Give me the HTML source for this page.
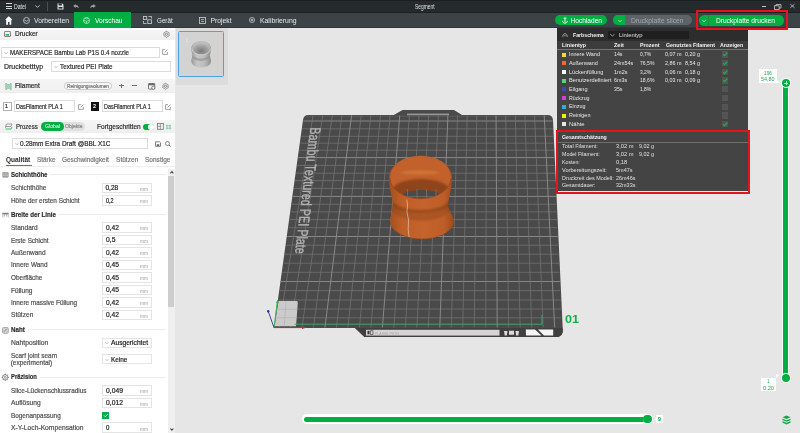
<!DOCTYPE html>
<html><head><meta charset="utf-8"><style>
html,body{margin:0;padding:0;}
body{width:800px;height:433px;overflow:hidden;position:relative;background:#e6e6e6;font-family:"Liberation Sans", sans-serif;}
.t{position:absolute;white-space:pre;font-family:"Liberation Sans", sans-serif;-webkit-text-stroke:0.2px currentColor;}
svg{position:absolute;overflow:visible}
</style></head><body><div style="position:absolute;left:0;top:0;width:800px;height:433px;overflow:hidden;filter:blur(0.25px)">
<div style="position:absolute;left:0px;top:0px;width:800px;height:12px;background:#252b2d"></div>
<div style="position:absolute;left:0px;top:0px;width:800px;height:1px;background:#1b1f21"></div>
<div style="position:absolute;left:6.2px;top:3.2px;width:6px;height:1px;background:#d8d8d8"></div>
<div style="position:absolute;left:6.2px;top:5.7px;width:6px;height:1px;background:#d8d8d8"></div>
<div style="position:absolute;left:6.2px;top:8.2px;width:6px;height:1px;background:#d8d8d8"></div>
<div class="t" style="left:13.80px;top:2px;font-size:6.500px;line-height:10px;color:#e6e6e6;font-weight:normal;transform:scaleX(0.7908);transform-origin:0 0;-webkit-text-stroke:0;">Datei</div>
<svg style="left:35px;top:5px" width="5" height="3"><path d="M0.3 0.4 L2.5 2.4 L4.7 0.4" stroke="#bfbfbf" stroke-width="0.9" fill="none"/></svg>
<div style="position:absolute;left:47.3px;top:2px;width:0.8px;height:9px;background:#4a4f52"></div>
<svg style="left:57px;top:3px" width="7" height="7"><path d="M0.5 0.5 H5.3 L6.5 1.7 V6.5 H0.5 Z" fill="#e0e0e0"/><rect x="1.6" y="0.5" width="3.2" height="2" fill="#252b2d"/><rect x="1.6" y="4" width="3.8" height="1.6" fill="#252b2d"/></svg>
<svg style="left:73px;top:4px" width="6" height="5"><path d="M0.2 2 L2.6 0 V1.1 C4.6 1.1 5.8 2.2 5.8 4.6 C5 3.3 4 3 2.6 3 V4.1 Z" fill="#9a9a9a"/></svg>
<svg style="left:90px;top:4px" width="6" height="5"><path d="M5.8 2 L3.4 0 V1.1 C1.4 1.1 0.2 2.2 0.2 4.6 C1 3.3 2 3 3.4 3 V4.1 Z" fill="#9a9a9a"/></svg>
<div class="t" style="left:414.50px;top:2px;font-size:6.500px;line-height:10px;color:#e0e0e0;font-weight:normal;transform:scaleX(0.7495);transform-origin:0 0;-webkit-text-stroke:0;">Segment</div>
<div style="position:absolute;left:762.3px;top:6.2px;width:4.2px;height:0.8px;background:#c8c8c8"></div>
<svg style="left:774px;top:3.5px" width="8" height="6"><rect x="0.5" y="1.8" width="4.6" height="3.6" fill="none" stroke="#c8c8c8" stroke-width="0.8"/><path d="M2 1.8 V0.5 H7 V4 H5.1" fill="none" stroke="#c8c8c8" stroke-width="0.8"/></svg>
<svg style="left:789.5px;top:4.3px" width="5" height="4"><path d="M0.3 0.2 L4.5 3.8 M4.5 0.2 L0.3 3.8" stroke="#c8c8c8" stroke-width="0.8"/></svg>
<div style="position:absolute;left:0px;top:12px;width:800px;height:16px;background:#3c4346"></div>
<div style="position:absolute;left:0px;top:11.5px;width:800px;height:1px;background:#1c2022"></div>
<div style="position:absolute;left:0px;top:27.3px;width:800px;height:0.7px;background:#30363a"></div>
<svg style="left:5px;top:16px" width="8" height="9"><path d="M3.75 0.3 L7.4 3.8 H6.3 V8.7 H4.5 V6 H3 V8.7 H1.2 V3.8 H0.1 Z" fill="#ffffff"/></svg>
<svg style="left:22.5px;top:16.5px" width="7" height="7"><circle cx="3.5" cy="3.5" r="3" fill="none" stroke="#d0d0d0" stroke-width="0.8"/><path d="M1.2 3 L3.5 4.2 L5.8 3" fill="none" stroke="#d0d0d0" stroke-width="0.8"/></svg>
<div class="t" style="left:33.70px;top:16px;font-size:6.800px;line-height:10px;color:#e8e8e8;font-weight:normal;transform:scaleX(1.0063);transform-origin:0 0;-webkit-text-stroke:0;">Vorbereiten</div>
<div style="position:absolute;left:74px;top:12px;width:56.5px;height:16px;background:#00ae42"></div>
<svg style="left:83px;top:16.5px" width="7" height="7"><circle cx="3.5" cy="3.5" r="3" fill="none" stroke="#bfe8cc" stroke-width="0.8"/><path d="M1 3.2 L3.5 4.5 L6 3.2 M3.5 4.5 V6.5 M2 1 L3.5 2 L5 1" fill="none" stroke="#bfe8cc" stroke-width="0.7"/></svg>
<div class="t" style="left:94.80px;top:16px;font-size:6.800px;line-height:10px;color:#ffffff;font-weight:normal;transform:scaleX(0.9699);transform-origin:0 0;-webkit-text-stroke:0;">Vorschau</div>
<svg style="left:142.5px;top:16px" width="9" height="8"><rect x="0.5" y="0.5" width="3.2" height="3" fill="none" stroke="#d0d0d0" stroke-width="0.8"/><rect x="4.8" y="3.8" width="3.6" height="3.8" fill="none" stroke="#d0d0d0" stroke-width="0.8"/><path d="M0.5 5 V7.5 H3.5 M5.5 0.5 H8.5 V2.5" fill="none" stroke="#d0d0d0" stroke-width="0.8"/></svg>
<div class="t" style="left:156.80px;top:16px;font-size:6.800px;line-height:10px;color:#e8e8e8;font-weight:normal;transform:scaleX(0.9231);transform-origin:0 0;-webkit-text-stroke:0;">Gerät</div>
<svg style="left:199px;top:16.5px" width="7" height="7"><rect x="0.5" y="0.5" width="6" height="6" fill="none" stroke="#d0d0d0" stroke-width="0.8"/><path d="M2 2.5 H5 M2 4.5 H5" stroke="#d0d0d0" stroke-width="0.7"/></svg>
<div class="t" style="left:210.50px;top:16px;font-size:6.800px;line-height:10px;color:#e8e8e8;font-weight:normal;-webkit-text-stroke:0;">Projekt</div>
<svg style="left:248.5px;top:17px" width="6" height="6"><circle cx="3" cy="3" r="2.5" fill="none" stroke="#d0d0d0" stroke-width="0.8"/><circle cx="3" cy="3" r="1" fill="#d0d0d0"/></svg>
<div class="t" style="left:259.50px;top:16px;font-size:6.800px;line-height:10px;color:#e8e8e8;font-weight:normal;transform:scaleX(1.0058);transform-origin:0 0;-webkit-text-stroke:0;">Kalibrierung</div>
<div style="position:absolute;left:554.7px;top:15.3px;width:52.5px;height:10px;background:#00ae42;border-radius:5px"></div>
<svg style="left:562px;top:17px" width="6" height="7"><path d="M3 0.5 V5.5 M1.5 1.2 H4.5 M0.5 3.8 C0.8 5.5 1.8 6.2 3 6.2 C4.2 6.2 5.2 5.5 5.5 3.8" fill="none" stroke="#fff" stroke-width="0.9"/></svg>
<div class="t" style="left:570.50px;top:16px;font-size:6.600px;line-height:10px;color:#ffffff;font-weight:normal;-webkit-text-stroke:0;">Hochladen</div>
<div style="position:absolute;left:613.4px;top:15.3px;width:78.6px;height:10px;background:#5d6366;border-radius:5px"></div>
<div style="position:absolute;left:613.4px;top:15.3px;width:12px;height:10px;background:#00ae42;border-radius:5px 0 0 5px"></div>
<svg style="left:617.5px;top:19.5px" width="4" height="2"><path d="M0.3 0.3 L2 1.6 L3.7 0.3" stroke="#e8f5ec" stroke-width="0.7" fill="none"/></svg>
<div class="t" style="left:630.50px;top:16px;font-size:6.600px;line-height:10px;color:#a3a8aa;font-weight:normal;transform:scaleX(1.0079);transform-origin:0 0;-webkit-text-stroke:0;">Druckplatte slicen</div>
<div style="position:absolute;left:698.7px;top:15px;width:85.5px;height:10.5px;background:#00ae42;border-radius:5.25px"></div>
<div style="position:absolute;left:708.3px;top:15px;width:0.7px;height:10.5px;background:#1e8c45"></div>
<svg style="left:701.5px;top:19.5px" width="4" height="2"><path d="M0.3 0.3 L2 1.6 L3.7 0.3" stroke="#e8f5ec" stroke-width="0.7" fill="none"/></svg>
<div class="t" style="left:715.70px;top:16px;font-size:6.600px;line-height:10px;color:#ffffff;font-weight:normal;transform:scaleX(1.0052);transform-origin:0 0;-webkit-text-stroke:0;">Druckplatte drucken</div>
<div style="position:absolute;left:0px;top:28px;width:175px;height:405px;background:#ffffff"></div>
<div style="position:absolute;left:0px;top:29.5px;width:175px;height:10.100000000000001px;background:linear-gradient(#f5f5f5,#efefef)"></div>
<svg style="left:4px;top:31px" width="7" height="6"><rect x="0.5" y="0.5" width="6" height="5" rx="0.5" fill="#f2f2f2" stroke="#7d7d7d" stroke-width="0.9"/><rect x="1.5" y="3" width="3.5" height="1.8" fill="#2fc46a"/></svg>
<div class="t" style="left:15.00px;top:29px;font-size:7.000px;line-height:10px;color:#2d2d2d;font-weight:normal;transform:scaleX(0.9264);transform-origin:0 0;">Drucker</div>
<svg style="left:162.5px;top:30.8px" width="7" height="7"><path d="M6.05 3.30 L6.04 3.57 L5.99 3.83 L6.14 4.16 L6.19 4.50 L6.10 4.80 L5.88 5.03 L5.56 5.16 L5.21 5.20 L5.00 5.36 L4.78 5.51 L4.54 5.63 L4.29 5.73 L4.08 6.01 L3.81 6.23 L3.50 6.30 L3.19 6.23 L2.92 6.01 L2.71 5.73 L2.46 5.63 L2.23 5.51 L2.00 5.36 L1.79 5.20 L1.44 5.16 L1.12 5.03 L0.90 4.80 L0.81 4.50 L0.86 4.16 L1.01 3.83 L0.96 3.57 L0.95 3.30 L0.96 3.03 L1.01 2.77 L0.86 2.44 L0.81 2.10 L0.90 1.80 L1.12 1.57 L1.44 1.44 L1.79 1.40 L2.00 1.24 L2.22 1.09 L2.46 0.97 L2.71 0.87 L2.92 0.59 L3.19 0.37 L3.50 0.30 L3.81 0.37 L4.08 0.59 L4.29 0.87 L4.54 0.97 L4.78 1.09 L5.00 1.24 L5.21 1.40 L5.56 1.44 L5.88 1.57 L6.10 1.80 L6.19 2.10 L6.14 2.44 L5.99 2.77 L6.04 3.03 Z" fill="none" stroke="#6e6e6e" stroke-width="0.8"/><circle cx="3.5" cy="3.3" r="1.1" fill="none" stroke="#6e6e6e" stroke-width="0.8"/></svg>
<div style="position:absolute;left:1.1px;top:47.2px;width:159.3px;height:11px;box-sizing:border-box;border:0.8px solid #dcdcdc;background:#fff"></div>
<svg style="left:3.9px;top:52.2px" width="4" height="2"><path d="M0.3 0.3 L2 1.6 L3.7 0.3" stroke="#9a9a9a" stroke-width="0.6" fill="none"/></svg>
<div class="t" style="left:9.70px;top:48px;font-size:7.000px;line-height:10px;color:#2a2a2a;font-weight:normal;transform:scaleX(0.8822);transform-origin:0 0;">MAKERSPACE Bambu Lab P1S 0.4 nozzle</div>
<svg style="left:162.2px;top:49px" width="6" height="6"><path d="M3 0.6 H0.6 V5.4 H5.4 V3" fill="none" stroke="#8a8a8a" stroke-width="0.8"/><path d="M2.6 3.4 L5.5 0.5" stroke="#8a8a8a" stroke-width="0.8"/></svg>
<div class="t" style="left:4.20px;top:62px;font-size:7.000px;line-height:10px;color:#2d2d2d;font-weight:normal;transform:scaleX(0.9925);transform-origin:0 0;">Druckbetttyp</div>
<div style="position:absolute;left:51.3px;top:60.5px;width:119.3px;height:11.7px;box-sizing:border-box;border:0.8px solid #dcdcdc;background:#fff"></div>
<svg style="left:54.099999999999994px;top:65.85px" width="4" height="2"><path d="M0.3 0.3 L2 1.6 L3.7 0.3" stroke="#9a9a9a" stroke-width="0.6" fill="none"/></svg>
<div class="t" style="left:60.20px;top:62px;font-size:7.000px;line-height:10px;color:#2a2a2a;font-weight:normal;transform:scaleX(0.9073);transform-origin:0 0;">Textured PEI Plate</div>
<div style="position:absolute;left:0px;top:79px;width:175px;height:13.700000000000003px;background:linear-gradient(#f5f5f5,#efefef)"></div>
<svg style="left:4.5px;top:82.5px" width="7" height="7"><rect x="1.3" y="1" width="4.4" height="5" fill="#8fdcaa"/><path d="M0.7 0.6 H2 M0.7 6.4 H2 M5 0.6 H6.3 M5 6.4 H6.3 M0.9 0.6 V6.4 M6.1 0.6 V6.4" stroke="#9a9a9a" stroke-width="0.8" fill="none"/></svg>
<div class="t" style="left:15.00px;top:81px;font-size:7.000px;line-height:10px;color:#2d2d2d;font-weight:normal;transform:scaleX(0.9202);transform-origin:0 0;">Filament</div>
<div style="position:absolute;left:64.3px;top:82px;width:47.5px;height:7.5px;box-sizing:border-box;border:0.7px solid #c9c9c9;border-radius:3.75px;background:#f6f6f6"></div>
<div class="t" style="left:67.00px;top:82px;font-size:4.500px;line-height:10px;color:#777777;font-weight:normal;transform:scaleX(1.0626);transform-origin:0 0;">Reinigungsvolumen</div>
<div style="position:absolute;left:119.4px;top:85.4px;width:4.6px;height:0.8px;background:#707070"></div>
<div style="position:absolute;left:121.3px;top:83.5px;width:0.8px;height:4.6px;background:#707070"></div>
<div style="position:absolute;left:131.6px;top:85.4px;width:5.4px;height:0.8px;background:#707070"></div>
<svg style="left:148px;top:82.5px" width="8" height="7"><rect x="0.5" y="0.5" width="6.2" height="5.6" rx="0.6" fill="none" stroke="#6a6a6a" stroke-width="0.9"/><rect x="0.5" y="0.5" width="6.2" height="1.8" fill="#6a6a6a"/><circle cx="5.3" cy="4.8" r="1.6" fill="#f2f2f2" stroke="#6a6a6a" stroke-width="0.8"/></svg>
<svg style="left:162.2px;top:82.7px" width="7" height="7"><path d="M6.05 3.30 L6.04 3.57 L5.99 3.83 L6.14 4.16 L6.19 4.50 L6.10 4.80 L5.88 5.03 L5.56 5.16 L5.21 5.20 L5.00 5.36 L4.78 5.51 L4.54 5.63 L4.29 5.73 L4.08 6.01 L3.81 6.23 L3.50 6.30 L3.19 6.23 L2.92 6.01 L2.71 5.73 L2.46 5.63 L2.23 5.51 L2.00 5.36 L1.79 5.20 L1.44 5.16 L1.12 5.03 L0.90 4.80 L0.81 4.50 L0.86 4.16 L1.01 3.83 L0.96 3.57 L0.95 3.30 L0.96 3.03 L1.01 2.77 L0.86 2.44 L0.81 2.10 L0.90 1.80 L1.12 1.57 L1.44 1.44 L1.79 1.40 L2.00 1.24 L2.22 1.09 L2.46 0.97 L2.71 0.87 L2.92 0.59 L3.19 0.37 L3.50 0.30 L3.81 0.37 L4.08 0.59 L4.29 0.87 L4.54 0.97 L4.78 1.09 L5.00 1.24 L5.21 1.40 L5.56 1.44 L5.88 1.57 L6.10 1.80 L6.19 2.10 L6.14 2.44 L5.99 2.77 L6.04 3.03 Z" fill="none" stroke="#6e6e6e" stroke-width="0.8"/><circle cx="3.5" cy="3.3" r="1.1" fill="none" stroke="#6e6e6e" stroke-width="0.8"/></svg>
<div style="position:absolute;left:3px;top:102px;width:9px;height:9px;box-sizing:border-box;border:1px solid #b0b0b0;background:#fff"></div>
<div class="t" style="left:5.20px;top:101px;font-size:5.500px;line-height:10px;color:#222;font-weight:normal;transform:scaleX(0.9806);transform-origin:0 0;">1</div>
<div style="position:absolute;left:13.8px;top:100.3px;width:61.7px;height:12.1px;box-sizing:border-box;border:0.8px solid #dcdcdc;background:#fff"></div>
<div class="t" style="left:15.60px;top:102px;font-size:7.000px;line-height:10px;color:#2a2a2a;font-weight:normal;transform:scaleX(0.7794);transform-origin:0 0;">DasFilament PLA 1</div>
<svg style="left:78px;top:103.5px" width="6" height="6"><path d="M3 0.6 H0.6 V5.4 H5.4 V3" fill="none" stroke="#8a8a8a" stroke-width="0.8"/><path d="M2.6 3.4 L5.5 0.5" stroke="#8a8a8a" stroke-width="0.8"/></svg>
<div style="position:absolute;left:90.7px;top:102px;width:8.3px;height:8.7px;background:#111"></div>
<div class="t" style="left:92.80px;top:101px;font-size:5.500px;line-height:10px;color:#fff;font-weight:normal;transform:scaleX(0.9806);transform-origin:0 0;">2</div>
<div style="position:absolute;left:101.6px;top:100.3px;width:61px;height:12.1px;box-sizing:border-box;border:0.8px solid #dcdcdc;background:#fff"></div>
<div class="t" style="left:103.60px;top:102px;font-size:7.000px;line-height:10px;color:#2a2a2a;font-weight:normal;transform:scaleX(0.7794);transform-origin:0 0;">DasFilament PLA 1</div>
<svg style="left:165.2px;top:103.5px" width="6" height="6"><path d="M3 0.6 H0.6 V5.4 H5.4 V3" fill="none" stroke="#8a8a8a" stroke-width="0.8"/><path d="M2.6 3.4 L5.5 0.5" stroke="#8a8a8a" stroke-width="0.8"/></svg>
<div style="position:absolute;left:0px;top:120px;width:175px;height:12.800000000000011px;background:linear-gradient(#f5f5f5,#efefef)"></div>
<svg style="left:4.5px;top:123px" width="8" height="8"><path d="M1.5 1 H7 L6 3.5 H0.5 Z" fill="none" stroke="#8a8a8a" stroke-width="0.8"/><path d="M0.6 3.6 V5" stroke="#8a8a8a" stroke-width="0.8"/><path d="M0.5 6 H6 L7 4" fill="none" stroke="#3cc070" stroke-width="1"/></svg>
<div class="t" style="left:16.00px;top:122px;font-size:7.000px;line-height:10px;color:#2d2d2d;font-weight:normal;transform:scaleX(0.8582);transform-origin:0 0;">Prozess</div>
<div style="position:absolute;left:40.9px;top:122px;width:43.9px;height:8.7px;background:#e0e0e0;border-radius:4.35px"></div>
<div style="position:absolute;left:40.9px;top:122px;width:22.8px;height:8.7px;background:#00ae42;border-radius:4.35px"></div>
<div class="t" style="left:44.50px;top:121px;font-size:5.000px;line-height:10px;color:#ffffff;font-weight:normal;transform:scaleX(1.0378);transform-origin:0 0;-webkit-text-stroke:0;">Global</div>
<div class="t" style="left:64.50px;top:121px;font-size:5.000px;line-height:10px;color:#8a8a8a;font-weight:normal;transform:scaleX(1.0156);transform-origin:0 0;">Objekte</div>
<div class="t" style="left:97.20px;top:122px;font-size:7.000px;line-height:10px;color:#2d2d2d;font-weight:normal;transform:scaleX(0.9360);transform-origin:0 0;">Fortgeschritten</div>
<div style="position:absolute;left:142.6px;top:124px;width:11.4px;height:5.8px;background:#00ae42;border-radius:2.9px"></div>
<div style="position:absolute;left:148.3px;top:124.1px;width:5.5px;height:5.5px;background:#fff;border-radius:50%"></div>
<svg style="left:157.3px;top:123.2px" width="7" height="7"><rect x="0.5" y="0.5" width="5.8" height="5.8" fill="none" stroke="#777" stroke-width="0.8"/><path d="M3.4 0.5 V6.3 M0.5 3.4 H3.4" stroke="#777" stroke-width="0.7"/></svg>
<svg style="left:166px;top:123.5px" width="5" height="6"><path d="M1 0.5 V5.5 M4 0.5 V5.5 M0 1.8 H5 M0 4.2 H5" stroke="#5cc886" stroke-width="0.7"/></svg>
<div style="position:absolute;left:12.2px;top:138.4px;width:135.5px;height:10.2px;box-sizing:border-box;border:0.8px solid #dcdcdc;background:#fff"></div>
<svg style="left:15.0px;top:143.0px" width="4" height="2"><path d="M0.3 0.3 L2 1.6 L3.7 0.3" stroke="#9a9a9a" stroke-width="0.6" fill="none"/></svg>
<div class="t" style="left:20.30px;top:139px;font-size:7.000px;line-height:10px;color:#2a2a2a;font-weight:normal;transform:scaleX(0.9210);transform-origin:0 0;">0.28mm Extra Draft @BBL X1C</div>
<svg style="left:154.8px;top:140.8px" width="6" height="6"><path d="M0.5 0.8 H4.6 L5.5 1.7 V5.3 H0.5 Z" fill="none" stroke="#666" stroke-width="0.8"/><rect x="1.8" y="3.2" width="2.4" height="2" fill="#666"/></svg>
<svg style="left:165px;top:140.5px" width="6" height="6"><circle cx="2.5" cy="2.5" r="2" fill="none" stroke="#666" stroke-width="0.8"/><path d="M4 4 L5.6 5.6" stroke="#666" stroke-width="0.9"/></svg>
<div class="t" style="left:6.30px;top:155px;font-size:7.000px;line-height:10px;color:#2a2a2a;font-weight:bold;transform:scaleX(0.9287);transform-origin:0 0;-webkit-text-stroke:0;">Qualität</div>
<div class="t" style="left:36.80px;top:155px;font-size:7.000px;line-height:10px;color:#767676;font-weight:normal;transform:scaleX(0.9144);transform-origin:0 0;">Stärke</div>
<div class="t" style="left:62.20px;top:155px;font-size:7.000px;line-height:10px;color:#767676;font-weight:normal;transform:scaleX(0.9202);transform-origin:0 0;">Geschwindigkeit</div>
<div class="t" style="left:116.00px;top:155px;font-size:7.000px;line-height:10px;color:#767676;font-weight:normal;transform:scaleX(0.9394);transform-origin:0 0;">Stützen</div>
<div class="t" style="left:145.20px;top:155px;font-size:7.000px;line-height:10px;color:#767676;font-weight:normal;transform:scaleX(0.9324);transform-origin:0 0;">Sonstige</div>
<div style="position:absolute;left:5.6px;top:164.6px;width:26.1px;height:1.3px;background:#00ae42"></div>
<div style="position:absolute;left:0px;top:166px;width:175px;height:0.8px;background:#eeeeee"></div>
<div style="position:absolute;left:168px;top:169.2px;width:7px;height:264px;background:#efefef"></div>
<div style="position:absolute;left:168.2px;top:176.2px;width:6.2px;height:131px;background:#cdcdcd"></div>
<svg style="left:169.6px;top:171.2px" width="4" height="3"><path d="M0.4 2.3 L1.9 0.6 L3.4 2.3" fill="none" stroke="#444" stroke-width="1.1"/></svg>
<svg style="left:169.6px;top:428.3px" width="4" height="3"><path d="M0.4 0.5 L1.9 2.2 L3.4 0.5" fill="none" stroke="#444" stroke-width="1.1"/></svg>
<svg style="left:2px;top:171.85px" width="7" height="6"><rect x="0.3" y="0.3" width="6.4" height="5.2" rx="1" fill="#8a8a8a"/><path d="M0.3 2 H6.7 M0.3 3.8 H6.7" stroke="#fff" stroke-width="0.6"/></svg>
<div class="t" style="left:11.25px;top:170px;font-size:7.000px;line-height:10px;color:#2e2e2e;font-weight:bold;transform:scaleX(0.8690);transform-origin:0 0;">Schichthöhe</div>
<div style="position:absolute;left:50.25px;top:174.15px;width:115.25px;height:0.7px;background:#ececec"></div>
<div class="t" style="left:10.70px;top:183px;font-size:6.500px;line-height:10px;color:#505050;font-weight:normal;transform:scaleX(0.9895);transform-origin:0 0;">Schichthöhe</div>
<div style="position:absolute;left:102.1px;top:182.5px;width:49.5px;height:10.699999999999989px;box-sizing:border-box;border:0.8px solid #e4e4e4;background:#fff"></div>
<div class="t" style="left:105.50px;top:183px;font-size:6.500px;line-height:10px;color:#222222;font-weight:normal;">0,28</div>
<div class="t" style="left:139.80px;top:184px;font-size:5.000px;line-height:10px;color:#9a9a9a;font-weight:normal;transform:scaleX(0.9723);transform-origin:0 0;-webkit-text-stroke:0;">mm</div>
<div class="t" style="left:10.70px;top:196px;font-size:6.500px;line-height:10px;color:#505050;font-weight:normal;transform:scaleX(0.9838);transform-origin:0 0;">Höhe der ersten Schicht</div>
<div style="position:absolute;left:102.1px;top:195.4px;width:49.5px;height:10.199999999999989px;box-sizing:border-box;border:0.8px solid #e4e4e4;background:#fff"></div>
<div class="t" style="left:105.50px;top:196px;font-size:6.500px;line-height:10px;color:#222222;font-weight:normal;transform:scaleX(0.8300);transform-origin:0 0;">0,2</div>
<div class="t" style="left:139.80px;top:196px;font-size:5.000px;line-height:10px;color:#9a9a9a;font-weight:normal;transform:scaleX(0.9723);transform-origin:0 0;-webkit-text-stroke:0;">mm</div>
<svg style="left:2px;top:211.8px" width="7" height="6"><rect x="0.3" y="0.8" width="6.4" height="1.6" fill="#7a7a7a"/><path d="M0.8 2.4 V5.5 M6.2 2.4 V5.5 M2.5 2.4 V4.5 M4.5 2.4 V4.5" stroke="#8a8a8a" stroke-width="0.6"/></svg>
<div class="t" style="left:11.25px;top:210px;font-size:7.000px;line-height:10px;color:#2e2e2e;font-weight:bold;transform:scaleX(0.8831);transform-origin:0 0;">Breite der Linie</div>
<div style="position:absolute;left:58.75px;top:214.10000000000002px;width:106.75px;height:0.7px;background:#ececec"></div>
<div class="t" style="left:10.70px;top:223px;font-size:6.500px;line-height:10px;color:#505050;font-weight:normal;transform:scaleX(1.0083);transform-origin:0 0;">Standard</div>
<div style="position:absolute;left:102.1px;top:222.2px;width:49.5px;height:10.5px;box-sizing:border-box;border:0.8px solid #e4e4e4;background:#fff"></div>
<div class="t" style="left:105.50px;top:223px;font-size:6.500px;line-height:10px;color:#222222;font-weight:normal;transform:scaleX(1.0275);transform-origin:0 0;">0,42</div>
<div class="t" style="left:139.80px;top:223px;font-size:5.000px;line-height:10px;color:#9a9a9a;font-weight:normal;transform:scaleX(0.9723);transform-origin:0 0;-webkit-text-stroke:0;">mm</div>
<div class="t" style="left:10.70px;top:236px;font-size:6.500px;line-height:10px;color:#505050;font-weight:normal;transform:scaleX(0.9793);transform-origin:0 0;">Erste Schicht</div>
<div style="position:absolute;left:102.1px;top:234.7px;width:49.5px;height:10.5px;box-sizing:border-box;border:0.8px solid #e4e4e4;background:#fff"></div>
<div class="t" style="left:105.50px;top:235px;font-size:6.500px;line-height:10px;color:#222222;font-weight:normal;transform:scaleX(1.0403);transform-origin:0 0;">0,5</div>
<div class="t" style="left:139.80px;top:236px;font-size:5.000px;line-height:10px;color:#9a9a9a;font-weight:normal;transform:scaleX(0.9723);transform-origin:0 0;-webkit-text-stroke:0;">mm</div>
<div class="t" style="left:10.70px;top:248px;font-size:6.500px;line-height:10px;color:#505050;font-weight:normal;transform:scaleX(0.9945);transform-origin:0 0;">Außenwand</div>
<div style="position:absolute;left:102.1px;top:247.2px;width:49.5px;height:10.5px;box-sizing:border-box;border:0.8px solid #e4e4e4;background:#fff"></div>
<div class="t" style="left:105.50px;top:248px;font-size:6.500px;line-height:10px;color:#222222;font-weight:normal;transform:scaleX(1.0275);transform-origin:0 0;">0,42</div>
<div class="t" style="left:139.80px;top:248px;font-size:5.000px;line-height:10px;color:#9a9a9a;font-weight:normal;transform:scaleX(0.9723);transform-origin:0 0;-webkit-text-stroke:0;">mm</div>
<div class="t" style="left:10.70px;top:260px;font-size:6.500px;line-height:10px;color:#505050;font-weight:normal;transform:scaleX(0.9871);transform-origin:0 0;">Innere Wand</div>
<div style="position:absolute;left:102.1px;top:259.7px;width:49.5px;height:10.5px;box-sizing:border-box;border:0.8px solid #e4e4e4;background:#fff"></div>
<div class="t" style="left:105.50px;top:260px;font-size:6.500px;line-height:10px;color:#222222;font-weight:normal;transform:scaleX(1.0275);transform-origin:0 0;">0,45</div>
<div class="t" style="left:139.80px;top:261px;font-size:5.000px;line-height:10px;color:#9a9a9a;font-weight:normal;transform:scaleX(0.9723);transform-origin:0 0;-webkit-text-stroke:0;">mm</div>
<div class="t" style="left:10.70px;top:273px;font-size:6.500px;line-height:10px;color:#505050;font-weight:normal;transform:scaleX(0.9875);transform-origin:0 0;">Oberfläche</div>
<div style="position:absolute;left:102.1px;top:272.2px;width:49.5px;height:10.5px;box-sizing:border-box;border:0.8px solid #e4e4e4;background:#fff"></div>
<div class="t" style="left:105.50px;top:273px;font-size:6.500px;line-height:10px;color:#222222;font-weight:normal;transform:scaleX(1.0275);transform-origin:0 0;">0,45</div>
<div class="t" style="left:139.80px;top:273px;font-size:5.000px;line-height:10px;color:#9a9a9a;font-weight:normal;transform:scaleX(0.9723);transform-origin:0 0;-webkit-text-stroke:0;">mm</div>
<div class="t" style="left:10.70px;top:286px;font-size:6.500px;line-height:10px;color:#505050;font-weight:normal;transform:scaleX(1.0085);transform-origin:0 0;">Füllung</div>
<div style="position:absolute;left:102.1px;top:284.7px;width:49.5px;height:10.5px;box-sizing:border-box;border:0.8px solid #e4e4e4;background:#fff"></div>
<div class="t" style="left:105.50px;top:285px;font-size:6.500px;line-height:10px;color:#222222;font-weight:normal;transform:scaleX(1.0275);transform-origin:0 0;">0,45</div>
<div class="t" style="left:139.80px;top:286px;font-size:5.000px;line-height:10px;color:#9a9a9a;font-weight:normal;transform:scaleX(0.9723);transform-origin:0 0;-webkit-text-stroke:0;">mm</div>
<div class="t" style="left:10.70px;top:298px;font-size:6.500px;line-height:10px;color:#505050;font-weight:normal;transform:scaleX(0.9821);transform-origin:0 0;">Innere massive Füllung</div>
<div style="position:absolute;left:102.1px;top:297.2px;width:49.5px;height:10.5px;box-sizing:border-box;border:0.8px solid #e4e4e4;background:#fff"></div>
<div class="t" style="left:105.50px;top:298px;font-size:6.500px;line-height:10px;color:#222222;font-weight:normal;transform:scaleX(1.0275);transform-origin:0 0;">0,42</div>
<div class="t" style="left:139.80px;top:298px;font-size:5.000px;line-height:10px;color:#9a9a9a;font-weight:normal;transform:scaleX(0.9723);transform-origin:0 0;-webkit-text-stroke:0;">mm</div>
<div class="t" style="left:10.70px;top:310px;font-size:6.500px;line-height:10px;color:#505050;font-weight:normal;transform:scaleX(1.0117);transform-origin:0 0;">Stützen</div>
<div style="position:absolute;left:102.1px;top:309.7px;width:49.5px;height:10.5px;box-sizing:border-box;border:0.8px solid #e4e4e4;background:#fff"></div>
<div class="t" style="left:105.50px;top:310px;font-size:6.500px;line-height:10px;color:#222222;font-weight:normal;transform:scaleX(1.0275);transform-origin:0 0;">0,42</div>
<div class="t" style="left:139.80px;top:311px;font-size:5.000px;line-height:10px;color:#9a9a9a;font-weight:normal;transform:scaleX(0.9723);transform-origin:0 0;-webkit-text-stroke:0;">mm</div>
<svg style="left:2.1px;top:327.1px" width="7" height="7"><rect x="0.5" y="0.5" width="5.8" height="5.8" rx="1" fill="#d2d2d2" stroke="#9a9a9a" stroke-width="0.8"/><path d="M1.8 4.8 L4.8 1.8" stroke="#7a7a7a" stroke-width="0.8"/></svg>
<div class="t" style="left:11.25px;top:325px;font-size:7.000px;line-height:10px;color:#2e2e2e;font-weight:bold;transform:scaleX(0.8872);transform-origin:0 0;">Naht</div>
<div style="position:absolute;left:27.55px;top:329.40000000000003px;width:137.95px;height:0.7px;background:#ececec"></div>
<div class="t" style="left:10.70px;top:338px;font-size:6.500px;line-height:10px;color:#505050;font-weight:normal;transform:scaleX(1.0322);transform-origin:0 0;">Nahtposition</div>
<div style="position:absolute;left:102.3px;top:337.7px;width:49.5px;height:10.5px;box-sizing:border-box;border:0.8px solid #e4e4e4;background:#fff"></div>
<svg style="left:105px;top:342.45px" width="4" height="2"><path d="M0.3 0.3 L2 1.6 L3.7 0.3" stroke="#9a9a9a" stroke-width="0.6" fill="none"/></svg>
<div class="t" style="left:110.90px;top:338px;font-size:6.500px;line-height:10px;color:#222222;font-weight:normal;transform:scaleX(1.0241);transform-origin:0 0;">Ausgerichtet</div>
<div class="t" style="left:10.70px;top:351px;font-size:6.500px;line-height:10px;color:#505050;font-weight:normal;transform:scaleX(0.9871);transform-origin:0 0;">Scarf joint seam</div>
<div class="t" style="left:10.70px;top:358px;font-size:6.500px;line-height:10px;color:#505050;font-weight:normal;">(experimental)</div>
<div style="position:absolute;left:102.3px;top:353.9px;width:49.5px;height:10.5px;box-sizing:border-box;border:0.8px solid #e4e4e4;background:#fff"></div>
<svg style="left:105px;top:358.65px" width="4" height="2"><path d="M0.3 0.3 L2 1.6 L3.7 0.3" stroke="#9a9a9a" stroke-width="0.6" fill="none"/></svg>
<div class="t" style="left:110.90px;top:355px;font-size:6.500px;line-height:10px;color:#222222;font-weight:normal;transform:scaleX(0.9865);transform-origin:0 0;">Keine</div>
<svg style="left:2px;top:374.35px" width="7" height="7"><path d="M6.40 3.30 L6.39 3.57 L5.66 3.72 L5.62 3.92 L5.56 4.12 L5.48 4.31 L5.38 4.50 L5.27 4.68 L5.67 5.29 L5.49 5.49 L5.29 5.67 L4.68 5.27 L4.50 5.38 L4.31 5.48 L4.12 5.56 L3.92 5.62 L3.72 5.66 L3.57 6.39 L3.30 6.40 L3.03 6.39 L2.88 5.66 L2.68 5.62 L2.48 5.56 L2.29 5.48 L2.10 5.38 L1.92 5.27 L1.31 5.67 L1.11 5.49 L0.93 5.29 L1.33 4.68 L1.22 4.50 L1.12 4.31 L1.04 4.12 L0.98 3.92 L0.94 3.72 L0.21 3.57 L0.20 3.30 L0.21 3.03 L0.94 2.88 L0.98 2.68 L1.04 2.48 L1.12 2.29 L1.22 2.10 L1.33 1.92 L0.93 1.31 L1.11 1.11 L1.31 0.93 L1.92 1.33 L2.10 1.22 L2.29 1.12 L2.48 1.04 L2.68 0.98 L2.88 0.94 L3.03 0.21 L3.30 0.20 L3.57 0.21 L3.72 0.94 L3.92 0.98 L4.12 1.04 L4.31 1.12 L4.50 1.22 L4.68 1.33 L5.29 0.93 L5.49 1.11 L5.67 1.31 L5.27 1.92 L5.38 2.10 L5.48 2.29 L5.56 2.48 L5.62 2.68 L5.66 2.88 L6.39 3.03 Z" fill="none" stroke="#5a5a5a" stroke-width="0.8"/><circle cx="3.3" cy="3.3" r="1" fill="none" stroke="#5a5a5a" stroke-width="0.6"/></svg>
<div class="t" style="left:11.25px;top:372px;font-size:7.000px;line-height:10px;color:#2e2e2e;font-weight:bold;transform:scaleX(0.8322);transform-origin:0 0;">Präzision</div>
<div style="position:absolute;left:39.65px;top:376.65000000000003px;width:125.85px;height:0.7px;background:#ececec"></div>
<div class="t" style="left:10.70px;top:386px;font-size:6.500px;line-height:10px;color:#505050;font-weight:normal;transform:scaleX(0.9858);transform-origin:0 0;">Slice-Lückenschlussradius</div>
<div style="position:absolute;left:102.1px;top:385.2px;width:49.5px;height:10.5px;box-sizing:border-box;border:0.8px solid #e4e4e4;background:#fff"></div>
<div class="t" style="left:105.50px;top:386px;font-size:6.500px;line-height:10px;color:#222222;font-weight:normal;transform:scaleX(1.0451);transform-origin:0 0;">0,049</div>
<div class="t" style="left:139.80px;top:386px;font-size:5.000px;line-height:10px;color:#9a9a9a;font-weight:normal;transform:scaleX(0.9723);transform-origin:0 0;-webkit-text-stroke:0;">mm</div>
<div class="t" style="left:10.70px;top:398px;font-size:6.500px;line-height:10px;color:#505050;font-weight:normal;transform:scaleX(1.0238);transform-origin:0 0;">Auflösung</div>
<div style="position:absolute;left:102.1px;top:397.7px;width:49.5px;height:10.5px;box-sizing:border-box;border:0.8px solid #e4e4e4;background:#fff"></div>
<div class="t" style="left:105.50px;top:398px;font-size:6.500px;line-height:10px;color:#222222;font-weight:normal;transform:scaleX(1.0451);transform-origin:0 0;">0,012</div>
<div class="t" style="left:139.80px;top:399px;font-size:5.000px;line-height:10px;color:#9a9a9a;font-weight:normal;transform:scaleX(0.9723);transform-origin:0 0;-webkit-text-stroke:0;">mm</div>
<div class="t" style="left:10.70px;top:411px;font-size:6.500px;line-height:10px;color:#505050;font-weight:normal;transform:scaleX(0.9822);transform-origin:0 0;">Bogenanpassung</div>
<div style="position:absolute;left:102.3px;top:412px;width:6.7px;height:6.6px;background:#00ae42;border-radius:0.6px"></div>
<svg style="left:103px;top:413px" width="6" height="5"><path d="M0.9 2.4 L2.3 3.8 L4.8 1" stroke="#fff" stroke-width="0.8" fill="none"/></svg>
<div class="t" style="left:10.70px;top:423px;font-size:6.500px;line-height:10px;color:#505050;font-weight:normal;transform:scaleX(1.0339);transform-origin:0 0;">X-Y-Loch-Kompensation</div>
<div style="position:absolute;left:102.1px;top:422.3px;width:49.5px;height:11.199999999999989px;box-sizing:border-box;border:0.8px solid #e4e4e4;background:#fff"></div>
<div class="t" style="left:105.50px;top:423px;font-size:6.500px;line-height:10px;color:#222222;font-weight:normal;transform:scaleX(0.9404);transform-origin:0 0;">0</div>
<div class="t" style="left:139.80px;top:424px;font-size:5.000px;line-height:10px;color:#9a9a9a;font-weight:normal;transform:scaleX(0.9723);transform-origin:0 0;-webkit-text-stroke:0;">mm</div>
<div style="position:absolute;left:175px;top:28px;width:625px;height:405px;background:#e6e6e6"></div>
<div style="position:absolute;left:176px;top:28px;width:52px;height:57px;background:#dcdcdc"></div>
<div style="position:absolute;left:178px;top:31px;width:46px;height:46.3px;box-sizing:border-box;border:1px solid #4ea0ee;border-radius:1.5px;background:#d3d3d3"></div>
<div class="t" style="left:185.60px;top:35px;font-size:6.000px;line-height:10px;color:#f2f2f2;font-weight:normal;transform:scaleX(0.5393);transform-origin:0 0;-webkit-text-stroke:0;">1</div>
<svg style="left:0;top:0" width="800" height="433">
<defs>
<linearGradient id="tg" x1="0" x2="1" y1="0" y2="0"><stop offset="0" stop-color="#9a9a9a"/><stop offset="0.3" stop-color="#c6c6c6"/><stop offset="0.65" stop-color="#bdbdbd"/><stop offset="1" stop-color="#8e8e8e"/></linearGradient>
<radialGradient id="tin" cx="0.5" cy="0.75" r="0.6"><stop offset="0" stop-color="#7a7a7a"/><stop offset="0.6" stop-color="#a0a0a0"/><stop offset="1" stop-color="#bdbdbd"/></radialGradient>
<filter id="tb" x="-50%" y="-50%" width="200%" height="200%"><feGaussianBlur stdDeviation="0.5"/></filter>
</defs>
<g filter="url(#tb)">
<path d="M191.3 47.8 A9.8 6.9 0 0 1 210.9 47.8 C210.9 52 209.8 54.5 210 56.4 C210.3 58 211.2 59 211.1 61 A9.8 6.5 0 0 1 191.2 61 C191.1 59 192.1 58 192.3 56.4 C192.5 54.5 191.3 52 191.3 47.8 Z" fill="url(#tg)"/>
<path d="M192 55 C196 59.5 206 59.5 210 55 L210 57.5 C206 62 196 62 192 57.5 Z" fill="#8f8f8f" opacity="0.6"/>
<ellipse cx="201.2" cy="47.8" rx="9.2" ry="6.6" fill="url(#tin)"/>
<path d="M192 48.5 A9.2 6.6 0 0 0 210.4 48.5" fill="none" stroke="#cfcfcf" stroke-width="0.9"/>
</g>
</svg>
<svg style="left:0;top:0" width="800" height="433">
<defs><linearGradient id="og" x1="0" x2="1" y1="0" y2="0"><stop offset="0" stop-color="#a8501c"/><stop offset="0.25" stop-color="#c9652b"/><stop offset="0.6" stop-color="#cf6a2e"/><stop offset="1" stop-color="#a9521e"/></linearGradient><linearGradient id="iw" x1="0" x2="0" y1="0" y2="1"><stop offset="0" stop-color="#c5622a"/><stop offset="0.55" stop-color="#b85a26"/><stop offset="1" stop-color="#8a4219"/></linearGradient><linearGradient id="wg" x1="0" x2="0" y1="0" y2="1"><stop offset="0" stop-color="#c8642b" stop-opacity="0"/><stop offset="0.5" stop-color="#7e3c17" stop-opacity="0.55"/><stop offset="1" stop-color="#c8642b" stop-opacity="0"/></linearGradient></defs>
<path d="M303 120 Q303.6 115 308.5 115 L393.8 115 L402.5 110 L454 110 L462 115 L547.5 115 Q552.5 115 553 120 L562.8 330 Q563 337 556 337 L364.5 337 L355 327.9 L274 327.9 Z" fill="#4a4a4a"/>
<path d="M355 327.9 L562.5 327.9 L562.8 330 Q563 337 556 337 L364.5 337 Z" fill="#404040"/>
<rect x="407" y="113.6" width="42" height="1.6" fill="#9a9a9a"/>
<path d="M306 116.2 L548 116.2" stroke="#5a5a5a" stroke-width="1"/>
<path d="M303.36 121 L552.55 121" stroke="#8e8e8e" stroke-width="0.9"/>
<path d="M302.27 128.8 L552.90 128.8" stroke="#777777" stroke-width="0.7"/>
<path d="M301.23 136.3 L553.24 136.3" stroke="#777777" stroke-width="0.7"/>
<path d="M300.26 143.2 L553.56 143.2" stroke="#777777" stroke-width="0.7"/>
<path d="M299.29 150.2 L553.88 150.2" stroke="#777777" stroke-width="0.7"/>
<path d="M298.26 157.6 L554.22 157.6" stroke="#8e8e8e" stroke-width="0.9"/>
<path d="M297.17 165.4 L554.57 165.4" stroke="#777777" stroke-width="0.7"/>
<path d="M296.08 173.2 L554.93 173.2" stroke="#777777" stroke-width="0.7"/>
<path d="M295.05 180.6 L555.27 180.6" stroke="#777777" stroke-width="0.7"/>
<path d="M293.96 188.4 L555.63 188.4" stroke="#777777" stroke-width="0.7"/>
<path d="M292.84 196.4 L555.99 196.4" stroke="#8e8e8e" stroke-width="0.9"/>
<path d="M291.75 204.2 L556.35 204.2" stroke="#777777" stroke-width="0.7"/>
<path d="M290.68 211.9 L556.70 211.9" stroke="#777777" stroke-width="0.7"/>
<path d="M289.61 219.6 L557.05 219.6" stroke="#777777" stroke-width="0.7"/>
<path d="M288.48 227.7 L557.42 227.7" stroke="#777777" stroke-width="0.7"/>
<path d="M287.25 236.5 L557.82 236.5" stroke="#8e8e8e" stroke-width="0.9"/>
<path d="M286.04 245.2 L558.22 245.2" stroke="#777777" stroke-width="0.7"/>
<path d="M284.78 254.2 L558.63 254.2" stroke="#777777" stroke-width="0.7"/>
<path d="M283.53 263.2 L559.04 263.2" stroke="#777777" stroke-width="0.7"/>
<path d="M282.26 272.3 L559.46 272.3" stroke="#777777" stroke-width="0.7"/>
<path d="M280.97 281.5 L559.88 281.5" stroke="#8e8e8e" stroke-width="0.9"/>
<path d="M279.70 290.6 L560.30 290.6" stroke="#777777" stroke-width="0.7"/>
<path d="M278.39 300 L560.73 300" stroke="#777777" stroke-width="0.7"/>
<path d="M277.14 309 L561.14 309" stroke="#777777" stroke-width="0.7"/>
<path d="M275.91 317.8 L561.54 317.8" stroke="#777777" stroke-width="0.7"/>
<path d="M313.04 115.5 L279.02 327.5" stroke="#777777" stroke-width="0.7"/>
<path d="M322.67 115.5 L290.50 327.5" stroke="#777777" stroke-width="0.7"/>
<path d="M332.31 115.5 L301.99 327.5" stroke="#777777" stroke-width="0.7"/>
<path d="M341.94 115.5 L313.47 327.5" stroke="#777777" stroke-width="0.7"/>
<path d="M351.57 115.5 L324.95 327.5" stroke="#8e8e8e" stroke-width="0.9"/>
<path d="M361.20 115.5 L336.44 327.5" stroke="#777777" stroke-width="0.7"/>
<path d="M370.84 115.5 L347.92 327.5" stroke="#777777" stroke-width="0.7"/>
<path d="M380.47 115.5 L359.40 327.5" stroke="#777777" stroke-width="0.7"/>
<path d="M390.10 115.5 L370.89 327.5" stroke="#777777" stroke-width="0.7"/>
<path d="M399.74 115.5 L382.37 327.5" stroke="#8e8e8e" stroke-width="0.9"/>
<path d="M409.37 115.5 L393.86 327.5" stroke="#777777" stroke-width="0.7"/>
<path d="M419.00 115.5 L405.34 327.5" stroke="#777777" stroke-width="0.7"/>
<path d="M428.63 115.5 L416.82 327.5" stroke="#777777" stroke-width="0.7"/>
<path d="M438.27 115.5 L428.31 327.5" stroke="#777777" stroke-width="0.7"/>
<path d="M447.90 115.5 L439.79 327.5" stroke="#8e8e8e" stroke-width="0.9"/>
<path d="M457.53 115.5 L451.27 327.5" stroke="#777777" stroke-width="0.7"/>
<path d="M467.16 115.5 L462.76 327.5" stroke="#777777" stroke-width="0.7"/>
<path d="M476.80 115.5 L474.24 327.5" stroke="#777777" stroke-width="0.7"/>
<path d="M486.43 115.5 L485.72 327.5" stroke="#777777" stroke-width="0.7"/>
<path d="M496.06 115.5 L497.21 327.5" stroke="#8e8e8e" stroke-width="0.9"/>
<path d="M505.70 115.5 L508.69 327.5" stroke="#777777" stroke-width="0.7"/>
<path d="M515.33 115.5 L520.17 327.5" stroke="#777777" stroke-width="0.7"/>
<path d="M524.96 115.5 L531.66 327.5" stroke="#777777" stroke-width="0.7"/>
<path d="M534.59 115.5 L543.14 327.5" stroke="#777777" stroke-width="0.7"/>
<path d="M544.23 115.5 L554.62 327.5" stroke="#8e8e8e" stroke-width="0.9"/>
<text x="0" y="0" transform="matrix(-0.122 1 -1 0 310.4 127.3)" font-family="Liberation Sans" font-weight="normal" font-size="15" fill="#b0b0b0" stroke="#b0b0b0" stroke-width="0.4" textLength="126.5" lengthAdjust="spacingAndGlyphs">Bambu Textured PEI Plate</text>
<path d="M278.5 301 L296.5 301 Q298 301 297.8 303 L296 326.3 L274.6 326.3 Z" fill="#cbcbcb"/>
<path d="M286 301 L284.3 326.3 M277 309.3 L297 309.3 M276 317.8 L296.5 317.8" stroke="#b0b0b0" stroke-width="0.6"/>
<path d="M294.4 324.2 L542 324.2 L542 315" fill="none" stroke="#3cb06a" stroke-width="0.9"/>
<path d="M274 327.6 L303 327.6" stroke="#d02a2a" stroke-width="1"/><path d="M302 326.2 L307 327.6 L302 329 Z" fill="#d02a2a"/>
<path d="M274 327.6 L277.2 302" stroke="#2fb14a" stroke-width="0.9"/><path d="M276 303 L277.6 299.5 L278.6 303.3 Z" fill="#2fb14a"/>
<path d="M274 327.6 L268.3 311.5" stroke="#2a2f9a" stroke-width="0.9"/><circle cx="268.2" cy="311.3" r="1.2" fill="#2a2f9a"/>
<rect x="366" y="329.8" width="133.5" height="5.8" fill="#d4d4d4"/>
<rect x="367.5" y="330.8" width="2" height="3.5" fill="#333"/><rect x="370.5" y="330.8" width="2.5" height="3.5" fill="none" stroke="#333" stroke-width="0.6"/>
<text x="375" y="334.6" font-family="Liberation Sans" font-size="4" fill="#a8a8a8" textLength="24" lengthAdjust="spacingAndGlyphs">PLA  BBL PETG</text>
<path d="M504 331 H507.5 L506.8 335.5 H504.7 Z M509 330.8 H514 V334.8 H509 Z M515.5 331 H519 L518.3 335.5 H516.2 Z" fill="#dcdcdc"/>
<path d="M525.8 329.5 H535 L541.5 335.6 H526 Z M538 329.5 H553.2 V335.6 H544 Z" fill="#f4f4f4"/>
<text x="565" y="323.3" font-family="Liberation Sans" font-weight="bold" font-size="11" fill="#13b049" textLength="14" lengthAdjust="spacingAndGlyphs">01</text>
<defs><clipPath id="e1"><ellipse cx="420.5" cy="177.5" rx="30.5" ry="20.8"/></clipPath><filter id="bl1" x="-50%" y="-50%" width="200%" height="200%"><feGaussianBlur stdDeviation="2.2"/></filter><filter id="bl2" x="-50%" y="-50%" width="200%" height="200%"><feGaussianBlur stdDeviation="1.2"/></filter><linearGradient id="lg2" x1="0" x2="1" y1="0" y2="0"><stop offset="0" stop-color="#a34f1e"/><stop offset="0.2" stop-color="#bf5f29"/><stop offset="0.55" stop-color="#c4632b"/><stop offset="0.85" stop-color="#bd5e29"/><stop offset="1" stop-color="#9c4b1b"/></linearGradient></defs>
<path d="M389 177.5 A31.5 21.8 0 0 1 452 177.5 C452 189 448.3 198 448.2 205 C448.2 211 453.8 215 453.8 221.5 A31.8 17.5 0 0 1 390.2 221.5 C390.2 215 392.8 211 392.8 205 C392.8 198 389 189 389 177.5 Z" fill="url(#lg2)"/>
<path d="M391 200 C404 214 438 214 450 200 L450 211 C438 224 404 224 391 211 Z" fill="#7a3a14" opacity="0.3" filter="url(#bl2)"/>
<path d="M392.8 204 A28 8.5 0 0 0 448.2 204" fill="none" stroke="#6e3410" stroke-width="1.6" opacity="0.55" filter="url(#bl2)"/>
<path d="M390.2 221.5 A31.8 17.5 0 0 0 453.8 221.5" fill="none" stroke="#8e4418" stroke-width="0.8" opacity="0.7"/>
<ellipse cx="420.5" cy="177.5" rx="30.5" ry="20.8" fill="#c2612b"/>
<g clip-path="url(#e1)"><ellipse cx="421" cy="190.5" rx="28.5" ry="11.5" fill="#7a3912" opacity="0.7" filter="url(#bl2)"/><ellipse cx="420" cy="172.5" rx="20" ry="2.2" fill="#dc8a4a" opacity="0.5" filter="url(#bl2)"/></g>
<path d="M390 178 A30.5 20.8 0 0 0 451 178" fill="none" stroke="#8a4218" stroke-width="0.7" opacity="0.8"/>
<g clip-path="url(#e1)"><ellipse cx="421.4" cy="196.2" rx="19.6" ry="6.2" fill="#4a4a4a"/><path d="M400 196.6 H442 M407.5 189 V201 M417 189 V201 M426.5 189 V201 M436 189 V201" stroke="#7a7a7a" stroke-width="0.7"/></g>
<path d="M401.6 196.2 A19.6 6.2 0 0 1 441.2 196.2" fill="none" stroke="#c8652c" stroke-width="0"/>
<g clip-path="url(#e1)"><path d="M400 196.2 A21.4 6.2 0 0 0 442.8 196.2 L452 196.2 L452 205 L390 205 L390 196.2 Z" fill="none"/></g>
<path d="M406.8 199.5 L407.6 206 L406.9 212 L408.6 220 L408.2 229 L409 237" fill="none" stroke="#e8d6c6" stroke-width="0.6"/>
</svg>
<div style="position:absolute;left:782.4px;top:79px;width:6.9px;height:303px;background:#ffffff;border-radius:3.5px"></div>
<div style="position:absolute;left:783.4px;top:86px;width:4.9px;height:292px;background:#00ae42"></div>
<div style="position:absolute;left:781.3px;top:78.3px;width:9.4px;height:9.4px;border-radius:50%;background:#fff"></div>
<div style="position:absolute;left:781.9px;top:78.9px;width:8.2px;height:8.2px;border-radius:50%;background:#00ae42"></div>
<div style="position:absolute;left:783.6px;top:82.7px;width:4.8px;height:0.7px;background:#b8ebc9"></div>
<div style="position:absolute;left:785.65px;top:80.7px;width:0.7px;height:4.6px;background:#b8ebc9"></div>
<div style="position:absolute;left:781.3px;top:373.2px;width:9.4px;height:9.4px;border-radius:50%;background:#fff"></div>
<div style="position:absolute;left:781.8px;top:373.7px;width:8.4px;height:8.4px;border-radius:50%;background:#00ae42"></div>
<div style="position:absolute;left:759px;top:69px;width:18px;height:13.5px;background:#ffffff"></div>
<svg style="left:776.5px;top:79.5px" width="4" height="5"><path d="M0 0 L3.5 3.3 L0 3.3 Z" fill="#fff"/></svg>
<div class="t" style="left:764.30px;top:68px;font-size:5.500px;line-height:10px;color:#1aa84e;font-weight:normal;transform:scaleX(0.8717);transform-origin:0 0;-webkit-text-stroke:0;">196</div>
<div class="t" style="left:761.20px;top:74px;font-size:5.500px;line-height:10px;color:#1aa84e;font-weight:normal;transform:scaleX(0.9808);transform-origin:0 0;-webkit-text-stroke:0;">54,80</div>
<div style="position:absolute;left:761px;top:377.8px;width:15.4px;height:13.4px;background:#ffffff"></div>
<svg style="left:776px;top:374px" width="4" height="5"><path d="M0 4 L3.5 0.5 L0 0.5 Z" fill="#fff"/></svg>
<div class="t" style="left:767.30px;top:376px;font-size:5.500px;line-height:10px;color:#1aa84e;font-weight:normal;transform:scaleX(0.8498);transform-origin:0 0;-webkit-text-stroke:0;">1</div>
<div class="t" style="left:762.80px;top:383px;font-size:5.500px;line-height:10px;color:#1aa84e;font-weight:normal;transform:scaleX(1.0275);transform-origin:0 0;-webkit-text-stroke:0;">0,20</div>
<svg style="left:781.5px;top:414.5px" width="9" height="10"><path d="M4.5 0.5 L8.5 2.3 L4.5 4.1 L0.5 2.3 Z" fill="#13a94a"/><path d="M0.5 4.3 L4.5 6.1 L8.5 4.3" fill="none" stroke="#13a94a" stroke-width="1.3"/><path d="M0.5 6.9 L4.5 8.7 L8.5 6.9" fill="none" stroke="#13a94a" stroke-width="1.3"/></svg>
<div style="position:absolute;left:301.6px;top:414.2px;width:351px;height:9.6px;background:#fff;border-radius:4.8px"></div>
<div style="position:absolute;left:303.9px;top:416.8px;width:344px;height:5.2px;background:#00ae42;border-radius:2.6px"></div>
<div style="position:absolute;left:642.6px;top:414.1px;width:9.8px;height:9.8px;border-radius:50%;background:#fff"></div>
<div style="position:absolute;left:643.2px;top:414.7px;width:8.6px;height:8.6px;border-radius:50%;background:#00ae42"></div>
<div style="position:absolute;left:656px;top:415.3px;width:7px;height:7.5px;background:#fff"></div>
<svg style="left:653.5px;top:417.5px" width="3" height="3"><path d="M3 0 L0.5 1.5 L3 3 Z" fill="#fff"/></svg>
<div class="t" style="left:657.90px;top:414px;font-size:5.000px;line-height:10px;color:#13a94a;font-weight:normal;transform:scaleX(1.0427);transform-origin:0 0;">9</div>
<div style="position:absolute;left:557.3px;top:28px;width:190.5px;height:163.3px;background:#444444"></div>
<div style="position:absolute;left:557.3px;top:28px;width:190.5px;height:13.1px;background:#2d2d2d"></div>
<svg style="left:562.3px;top:32.6px" width="6" height="4"><path d="M0.4 3.6 C1.2 1.4 2 0.6 3 0.6 C4 0.6 4.8 1.4 5.6 3.6" fill="none" stroke="#a8a8a8" stroke-width="0.9"/><path d="M1.6 3.6 C2 2.6 2.5 2.2 3 2.2 C3.5 2.2 4 2.6 4.4 3.6" fill="none" stroke="#a8a8a8" stroke-width="0.7"/></svg>
<div class="t" style="left:572.90px;top:30px;font-size:6.000px;line-height:10px;color:#f0f0f0;font-weight:bold;transform:scaleX(0.8685);transform-origin:0 0;-webkit-text-stroke:0;">Farbschema</div>
<div style="position:absolute;left:607.8px;top:31.4px;width:81.2px;height:7.3px;background:#1f1f1f"></div>
<svg style="left:609.5px;top:34.3px" width="5" height="2.5"><path d="M0.3 0.3 L2.4 2 L4.5 0.3" stroke="#cfcfcf" stroke-width="0.7" fill="none"/></svg>
<div class="t" style="left:618.50px;top:30px;font-size:6.000px;line-height:10px;color:#e0e0e0;font-weight:normal;transform:scaleX(0.9784);transform-origin:0 0;-webkit-text-stroke:0;">Linientyp</div>
<div style="position:absolute;left:557.3px;top:41.1px;width:190.5px;height:7.7px;background:#3c3c3c"></div>
<div style="position:absolute;left:557.3px;top:48.75px;width:190.5px;height:1px;background:#757575"></div>
<div class="t" style="left:561.60px;top:40px;font-size:6.000px;line-height:10px;color:#f2f2f2;font-weight:bold;transform:scaleX(0.9038);transform-origin:0 0;-webkit-text-stroke:0;">Linientyp</div>
<div class="t" style="left:613.75px;top:40px;font-size:6.000px;line-height:10px;color:#f2f2f2;font-weight:bold;transform:scaleX(0.9140);transform-origin:0 0;-webkit-text-stroke:0;">Zeit</div>
<div class="t" style="left:639.75px;top:40px;font-size:6.000px;line-height:10px;color:#f2f2f2;font-weight:bold;transform:scaleX(0.8817);transform-origin:0 0;-webkit-text-stroke:0;">Prozent</div>
<div class="t" style="left:665.60px;top:40px;font-size:6.000px;line-height:10px;color:#f2f2f2;font-weight:bold;transform:scaleX(0.8836);transform-origin:0 0;-webkit-text-stroke:0;">Genutztes Filament</div>
<div class="t" style="left:719.90px;top:40px;font-size:6.000px;line-height:10px;color:#f2f2f2;font-weight:bold;transform:scaleX(0.8699);transform-origin:0 0;-webkit-text-stroke:0;">Anzeigen</div>
<div style="position:absolute;left:562px;top:52.5px;width:4px;height:4px;background:#f3d53e"></div>
<div class="t" style="left:569.10px;top:49px;font-size:6.000px;line-height:10px;color:#e8e8e8;font-weight:normal;transform:scaleX(0.9053);transform-origin:0 0;-webkit-text-stroke:0;">Innere Wand</div>
<div class="t" style="left:613.75px;top:49px;font-size:6.000px;line-height:10px;color:#e8e8e8;font-weight:normal;transform:scaleX(0.8786);transform-origin:0 0;-webkit-text-stroke:0;">14s</div>
<div class="t" style="left:639.75px;top:49px;font-size:6.000px;line-height:10px;color:#e8e8e8;font-weight:normal;transform:scaleX(0.8226);transform-origin:0 0;-webkit-text-stroke:0;">0,7%</div>
<div class="t" style="left:665.40px;top:49px;font-size:6.000px;line-height:10px;color:#e8e8e8;font-weight:normal;transform:scaleX(0.9050);transform-origin:0 0;-webkit-text-stroke:0;">0,07 m</div>
<div class="t" style="left:685.00px;top:49px;font-size:6.000px;line-height:10px;color:#e8e8e8;font-weight:normal;transform:scaleX(0.8992);transform-origin:0 0;-webkit-text-stroke:0;">0,20 g</div>
<div style="position:absolute;left:721.6px;top:51.25px;width:6.3px;height:6.3px;background:#545454"></div>
<svg style="left:721.6px;top:51.25px" width="6.3" height="6.3"><path d="M1.1 3.3 L2.6 4.7 L5.3 1.6" stroke="#13b24b" stroke-width="1.25" fill="none"/></svg>
<div style="position:absolute;left:562px;top:61.22px;width:4px;height:4px;background:#f36b2b"></div>
<div class="t" style="left:569.10px;top:58px;font-size:6.000px;line-height:10px;color:#e8e8e8;font-weight:normal;transform:scaleX(0.8994);transform-origin:0 0;-webkit-text-stroke:0;">Außenwand</div>
<div class="t" style="left:613.75px;top:58px;font-size:6.000px;line-height:10px;color:#e8e8e8;font-weight:normal;transform:scaleX(0.8948);transform-origin:0 0;-webkit-text-stroke:0;">24m54s</div>
<div class="t" style="left:639.75px;top:58px;font-size:6.000px;line-height:10px;color:#e8e8e8;font-weight:normal;transform:scaleX(0.8464);transform-origin:0 0;-webkit-text-stroke:0;">76,5%</div>
<div class="t" style="left:665.40px;top:58px;font-size:6.000px;line-height:10px;color:#e8e8e8;font-weight:normal;transform:scaleX(0.9050);transform-origin:0 0;-webkit-text-stroke:0;">2,86 m</div>
<div class="t" style="left:685.00px;top:58px;font-size:6.000px;line-height:10px;color:#e8e8e8;font-weight:normal;transform:scaleX(0.8992);transform-origin:0 0;-webkit-text-stroke:0;">8,54 g</div>
<div style="position:absolute;left:721.6px;top:59.97px;width:6.3px;height:6.3px;background:#545454"></div>
<svg style="left:721.6px;top:59.97px" width="6.3" height="6.3"><path d="M1.1 3.3 L2.6 4.7 L5.3 1.6" stroke="#13b24b" stroke-width="1.25" fill="none"/></svg>
<div style="position:absolute;left:562px;top:69.94000000000001px;width:4px;height:4px;background:#ffffff"></div>
<div class="t" style="left:569.10px;top:67px;font-size:6.000px;line-height:10px;color:#e8e8e8;font-weight:normal;transform:scaleX(0.9290);transform-origin:0 0;-webkit-text-stroke:0;">Lückenfüllung</div>
<div class="t" style="left:613.75px;top:67px;font-size:6.000px;line-height:10px;color:#e8e8e8;font-weight:normal;transform:scaleX(0.9201);transform-origin:0 0;-webkit-text-stroke:0;">1m2s</div>
<div class="t" style="left:639.75px;top:67px;font-size:6.000px;line-height:10px;color:#e8e8e8;font-weight:normal;transform:scaleX(0.8226);transform-origin:0 0;-webkit-text-stroke:0;">3,2%</div>
<div class="t" style="left:665.40px;top:67px;font-size:6.000px;line-height:10px;color:#e8e8e8;font-weight:normal;transform:scaleX(0.9050);transform-origin:0 0;-webkit-text-stroke:0;">0,06 m</div>
<div class="t" style="left:685.00px;top:67px;font-size:6.000px;line-height:10px;color:#e8e8e8;font-weight:normal;transform:scaleX(0.8992);transform-origin:0 0;-webkit-text-stroke:0;">0,18 g</div>
<div style="position:absolute;left:721.6px;top:68.69000000000001px;width:6.3px;height:6.3px;background:#545454"></div>
<svg style="left:721.6px;top:68.69000000000001px" width="6.3" height="6.3"><path d="M1.1 3.3 L2.6 4.7 L5.3 1.6" stroke="#13b24b" stroke-width="1.25" fill="none"/></svg>
<div style="position:absolute;left:562px;top:78.66000000000001px;width:4px;height:4px;background:#5ad08c"></div>
<div class="t" style="left:569.10px;top:75px;font-size:6.000px;line-height:10px;color:#e8e8e8;font-weight:normal;transform:scaleX(0.9369);transform-origin:0 0;-webkit-text-stroke:0;">Benutzerdefiniert</div>
<div class="t" style="left:613.75px;top:75px;font-size:6.000px;line-height:10px;color:#e8e8e8;font-weight:normal;transform:scaleX(0.9031);transform-origin:0 0;-webkit-text-stroke:0;">6m3s</div>
<div class="t" style="left:639.75px;top:75px;font-size:6.000px;line-height:10px;color:#e8e8e8;font-weight:normal;transform:scaleX(0.8464);transform-origin:0 0;-webkit-text-stroke:0;">18,6%</div>
<div class="t" style="left:665.40px;top:75px;font-size:6.000px;line-height:10px;color:#e8e8e8;font-weight:normal;transform:scaleX(0.9050);transform-origin:0 0;-webkit-text-stroke:0;">0,03 m</div>
<div class="t" style="left:685.00px;top:75px;font-size:6.000px;line-height:10px;color:#e8e8e8;font-weight:normal;transform:scaleX(0.8992);transform-origin:0 0;-webkit-text-stroke:0;">0,09 g</div>
<div style="position:absolute;left:721.6px;top:77.41000000000001px;width:6.3px;height:6.3px;background:#545454"></div>
<svg style="left:721.6px;top:77.41000000000001px" width="6.3" height="6.3"><path d="M1.1 3.3 L2.6 4.7 L5.3 1.6" stroke="#13b24b" stroke-width="1.25" fill="none"/></svg>
<div style="position:absolute;left:562px;top:87.38000000000001px;width:4px;height:4px;background:#3b4bb0"></div>
<div class="t" style="left:569.10px;top:84px;font-size:6.000px;line-height:10px;color:#e8e8e8;font-weight:normal;transform:scaleX(0.9243);transform-origin:0 0;-webkit-text-stroke:0;">Eilgang</div>
<div class="t" style="left:613.75px;top:84px;font-size:6.000px;line-height:10px;color:#e8e8e8;font-weight:normal;transform:scaleX(0.8786);transform-origin:0 0;-webkit-text-stroke:0;">35s</div>
<div class="t" style="left:639.75px;top:84px;font-size:6.000px;line-height:10px;color:#e8e8e8;font-weight:normal;transform:scaleX(0.8226);transform-origin:0 0;-webkit-text-stroke:0;">1,8%</div>
<div style="position:absolute;left:721.6px;top:86.13000000000001px;width:6.3px;height:6.3px;background:#545454"></div>
<div style="position:absolute;left:562px;top:96.10000000000001px;width:4px;height:4px;background:#d83cd8"></div>
<div class="t" style="left:569.10px;top:93px;font-size:6.000px;line-height:10px;color:#e8e8e8;font-weight:normal;transform:scaleX(0.8782);transform-origin:0 0;-webkit-text-stroke:0;">Rückzug</div>
<div style="position:absolute;left:721.6px;top:94.85000000000001px;width:6.3px;height:6.3px;background:#545454"></div>
<div style="position:absolute;left:562px;top:104.82000000000002px;width:4px;height:4px;background:#3aa6da"></div>
<div class="t" style="left:569.10px;top:101px;font-size:6.000px;line-height:10px;color:#e8e8e8;font-weight:normal;transform:scaleX(0.8994);transform-origin:0 0;-webkit-text-stroke:0;">Einzug</div>
<div style="position:absolute;left:721.6px;top:103.57000000000002px;width:6.3px;height:6.3px;background:#545454"></div>
<div style="position:absolute;left:562px;top:113.54000000000002px;width:4px;height:4px;background:#f5f000"></div>
<div class="t" style="left:569.10px;top:110px;font-size:6.000px;line-height:10px;color:#e8e8e8;font-weight:normal;transform:scaleX(0.9036);transform-origin:0 0;-webkit-text-stroke:0;">Reinigen</div>
<div style="position:absolute;left:721.6px;top:112.29000000000002px;width:6.3px;height:6.3px;background:#545454"></div>
<div style="position:absolute;left:562px;top:122.26000000000002px;width:4px;height:4px;background:#e6e6e6"></div>
<div class="t" style="left:569.10px;top:119px;font-size:6.000px;line-height:10px;color:#e8e8e8;font-weight:normal;transform:scaleX(0.9681);transform-origin:0 0;-webkit-text-stroke:0;">Nähte</div>
<div style="position:absolute;left:721.6px;top:121.01000000000002px;width:6.3px;height:6.3px;background:#545454"></div>
<svg style="left:721.6px;top:121.01000000000002px" width="6.3" height="6.3"><path d="M1.1 3.3 L2.6 4.7 L5.3 1.6" stroke="#13b24b" stroke-width="1.25" fill="none"/></svg>
<div style="position:absolute;left:557.3px;top:141.5px;width:190.5px;height:0.9px;background:#6e6e6e"></div>
<div class="t" style="left:562.10px;top:132px;font-size:6.000px;line-height:10px;color:#f2f2f2;font-weight:bold;transform:scaleX(0.8669);transform-origin:0 0;-webkit-text-stroke:0;">Gesamtschätzung</div>
<div class="t" style="left:562.10px;top:141px;font-size:6.000px;line-height:10px;color:#e0e0e0;font-weight:normal;transform:scaleX(0.9202);transform-origin:0 0;-webkit-text-stroke:0;">Total Filament:</div>
<div class="t" style="left:615.80px;top:141px;font-size:6.000px;line-height:10px;color:#e0e0e0;font-weight:normal;transform:scaleX(0.9486);transform-origin:0 0;-webkit-text-stroke:0;">3,02 m</div>
<div class="t" style="left:638.90px;top:141px;font-size:6.000px;line-height:10px;color:#e0e0e0;font-weight:normal;transform:scaleX(0.9052);transform-origin:0 0;-webkit-text-stroke:0;">9,02 g</div>
<div class="t" style="left:562.10px;top:149px;font-size:6.000px;line-height:10px;color:#e0e0e0;font-weight:normal;transform:scaleX(0.8856);transform-origin:0 0;-webkit-text-stroke:0;">Model Filament:</div>
<div class="t" style="left:615.80px;top:149px;font-size:6.000px;line-height:10px;color:#e0e0e0;font-weight:normal;transform:scaleX(0.9486);transform-origin:0 0;-webkit-text-stroke:0;">3,02 m</div>
<div class="t" style="left:638.90px;top:149px;font-size:6.000px;line-height:10px;color:#e0e0e0;font-weight:normal;transform:scaleX(0.9052);transform-origin:0 0;-webkit-text-stroke:0;">9,02 g</div>
<div class="t" style="left:562.10px;top:157px;font-size:6.000px;line-height:10px;color:#e0e0e0;font-weight:normal;transform:scaleX(0.8748);transform-origin:0 0;-webkit-text-stroke:0;">Kosten:</div>
<div class="t" style="left:615.80px;top:157px;font-size:6.000px;line-height:10px;color:#e0e0e0;font-weight:normal;transform:scaleX(0.9676);transform-origin:0 0;-webkit-text-stroke:0;">0,18</div>
<div class="t" style="left:562.10px;top:165px;font-size:6.000px;line-height:10px;color:#e0e0e0;font-weight:normal;transform:scaleX(0.9328);transform-origin:0 0;-webkit-text-stroke:0;">Vorbereitungszeit:</div>
<div class="t" style="left:615.80px;top:165px;font-size:6.000px;line-height:10px;color:#e0e0e0;font-weight:normal;transform:scaleX(0.9162);transform-origin:0 0;-webkit-text-stroke:0;">5m47s</div>
<div class="t" style="left:562.10px;top:173px;font-size:6.000px;line-height:10px;color:#e0e0e0;font-weight:normal;transform:scaleX(0.9014);transform-origin:0 0;-webkit-text-stroke:0;">Druckzeit des Modell:</div>
<div class="t" style="left:615.80px;top:173px;font-size:6.000px;line-height:10px;color:#e0e0e0;font-weight:normal;transform:scaleX(0.9088);transform-origin:0 0;-webkit-text-stroke:0;">26m46s</div>
<div class="t" style="left:562.10px;top:180px;font-size:6.000px;line-height:10px;color:#e0e0e0;font-weight:normal;transform:scaleX(0.8811);transform-origin:0 0;-webkit-text-stroke:0;">Gesamtdauer:</div>
<div class="t" style="left:615.80px;top:180px;font-size:6.000px;line-height:10px;color:#e0e0e0;font-weight:normal;transform:scaleX(0.9088);transform-origin:0 0;-webkit-text-stroke:0;">32m33s</div>
<div style="position:absolute;left:556px;top:130px;width:194.3px;height:63.8px;box-sizing:border-box;border:2px solid #e3141c"></div>
<div style="position:absolute;left:696px;top:10px;width:92px;height:20px;box-sizing:border-box;border:2px solid #e3141c"></div>
</div></body></html>
